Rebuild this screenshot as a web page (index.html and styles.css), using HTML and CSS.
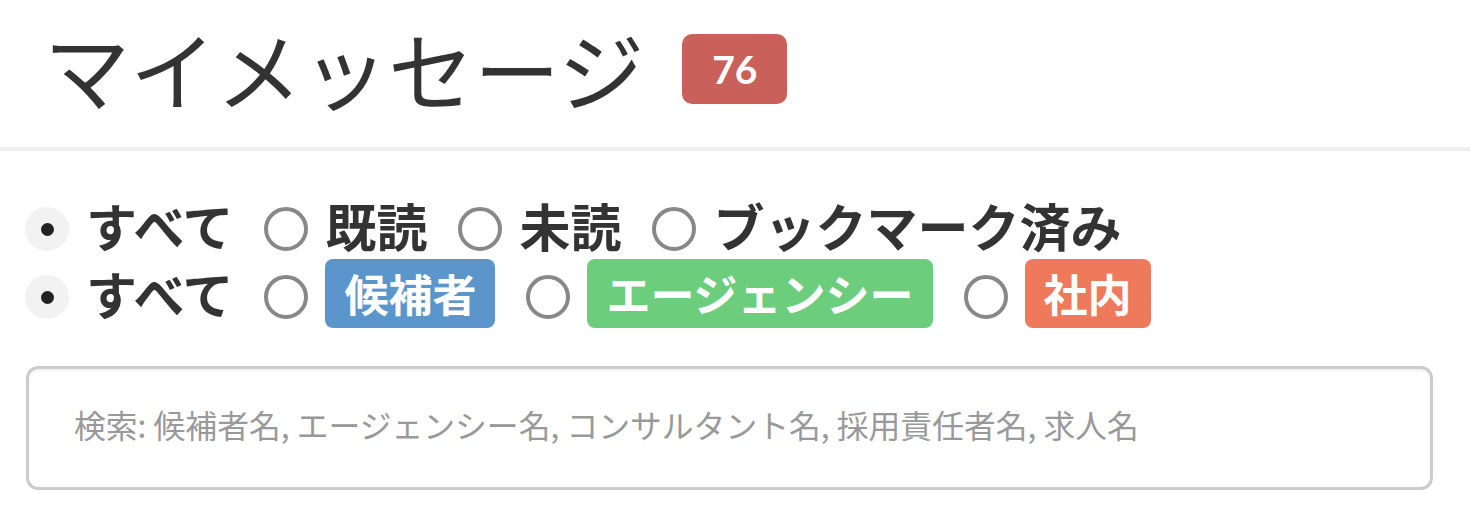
FILE: index.html
```html
<!DOCTYPE html>
<html lang="ja">
<head>
<meta charset="utf-8">
<title>マイメッセージ</title>
<link rel="stylesheet" href="styles.css">
</head>
<body>
<header class="header">
  <h1 class="title">マイメッセージ</h1>
  <span class="count">76</span>
</header>
<section class="filters">
  <div class="row">
    <label class="opt"><input type="radio" name="read" class="radio" checked><span class="text">すべて</span></label>
    <label class="opt"><input type="radio" name="read" class="radio"><span class="text">既読</span></label>
    <label class="opt"><input type="radio" name="read" class="radio"><span class="text">未読</span></label>
    <label class="opt"><input type="radio" name="read" class="radio"><span class="text">ブックマーク済み</span></label>
  </div>
  <div class="row">
    <label class="opt"><input type="radio" name="kind" class="radio" checked><span class="text">すべて</span></label>
    <label class="opt"><input type="radio" name="kind" class="radio"><span class="tag tag-blue">候補者</span></label>
    <label class="opt"><input type="radio" name="kind" class="radio"><span class="tag tag-green">エージェンシー</span></label>
    <label class="opt"><input type="radio" name="kind" class="radio"><span class="tag tag-orange">社内</span></label>
  </div>
</section>
<div class="search-wrap">
  <input class="search" type="text" placeholder="検索: 候補者名, エージェンシー名, コンサルタント名, 採用責任者名, 求人名">
</div>
</body>
</html>
```
FILE: styles.css
```css
html, body {
  margin: 0;
  padding: 0;
  background: #fff;
}
body {
  font-family: "Lato", "Noto Sans CJK JP", sans-serif;
  color: #333;
}
.header {
  display: flex;
  align-items: center;
  gap: 38px;
  height: 151px;
  padding-left: 44px;
  padding-bottom: 12px;
  box-sizing: border-box;
  border-bottom: 4px solid #eee;
}
.title {
  margin: 0;
  font-family: "Noto Sans CJK JP", sans-serif;
  font-size: 86px;
  font-weight: 400;
  line-height: 1;
  color: #333;
}
.count {
  display: flex;
  align-items: center;
  justify-content: center;
  width: 105px;
  height: 70px;
  background: #c9605a;
  color: #fff;
  border-radius: 10px;
  font-family: "Lato", sans-serif;
  font-weight: 700;
  font-size: 39px;
  margin-top: 2px;
}
.filters {
  padding: 40px 0 0 25px;
}
.row {
  display: flex;
  align-items: center;
  height: 68px;
}
.opt {
  display: flex;
  align-items: center;
  margin-right: 31px;
}
.radio {
  appearance: none;
  -webkit-appearance: none;
  margin: 8px 17px 0 0;
  width: 44px;
  height: 44px;
  border-radius: 50%;
  border: 4px solid #888;
  background: #fff;
  box-sizing: border-box;
  flex: none;
  display: flex;
  align-items: center;
  justify-content: center;
}
.radio:checked {
  border-color: #f2f2f2;
  background: #f2f2f2;
}
.radio:checked::after {
  content: "";
  width: 13px;
  height: 13px;
  border-radius: 50%;
  background: #222;
}
.text {
  font-family: "Noto Sans CJK JP", sans-serif;
  font-weight: 700;
  font-size: 51px;
  line-height: 1;
  color: #333;
}
.tag {
  display: inline-flex;
  align-items: center;
  height: 69px;
  padding: 0 19px;
  border-radius: 8px;
  color: #fff;
  font-family: "Noto Sans CJK JP", sans-serif;
  font-weight: 700;
  font-size: 44px;
  box-sizing: border-box;
}
.tag-blue { background: #5a96cb; }
.tag-green { background: #6ccd7d; }
.tag-orange { background: #ee7a5b; }
.search-wrap {
  padding: 39px 37px 0 26px;
}
.search {
  display: block;
  width: 100%;
  height: 124px;
  box-sizing: border-box;
  border: 3px solid #ccc;
  border-radius: 12px;
  box-shadow: inset 0 2px 3px rgba(0, 0, 0, 0.06);
  padding: 0 0 8px 45px;
  font-family: "Noto Sans CJK JP", sans-serif;
  font-size: 31.8px;
  color: #333;
  outline: none;
  background: #fff;
}
.search::placeholder {
  color: #999;
}
```
